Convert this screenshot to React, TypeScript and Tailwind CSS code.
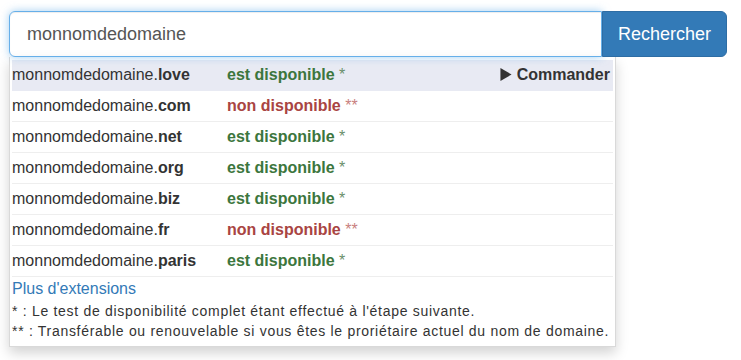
import { Fragment } from "react";

type Row = {
  tld: string;
  free: boolean;
};

const rows: Row[] = [
  { tld: "love", free: true },
  { tld: "com", free: false },
  { tld: "net", free: true },
  { tld: "org", free: true },
  { tld: "biz", free: true },
  { tld: "fr", free: false },
  { tld: "paris", free: true },
];

function ResultRow({ row, active }: { row: Row; active: boolean }) {
  return (
    <div
      className={
        active
          ? "flex items-center h-[31px] pb-[1px] bg-[#e8eaf3] border-b border-transparent"
          : "flex items-center h-[31px] border-b border-[#eeeeee]"
      }
    >
      <div className="w-[215px] shrink-0 text-[#333]">
        monnomdedomaine.<span className="font-bold">{row.tld}</span>
      </div>
      {row.free ? (
        <div className="text-[#3c763d]">
          <span className="font-bold">est disponible</span>
          <span className="text-[#6a8f6b]"> *</span>
        </div>
      ) : (
        <div className="text-[#a94442]">
          <span className="font-bold">non disponible</span>
          <span className="text-[#c98080]"> **</span>
        </div>
      )}
      {active && (
        <div className="ml-auto pr-[3px] font-bold text-[#333] flex items-center gap-[5px]">
          <svg viewBox="0 0 12 14" className="w-[12px] h-[13px]" fill="#333">
            <path d="M0 0 L12 7 L0 14 Z" />
          </svg>
          Commander
        </div>
      )}
    </div>
  );
}

export default function App() {
  return (
    <div
      className="w-[741px] h-[360px] bg-white pl-[9px] pt-[11px]"
      style={{ fontFamily: '"Liberation Sans", Arial, sans-serif' }}
    >
      <div className="flex w-[718px]">
        <div className="w-[593px] h-[46px] border border-[#66afe9] rounded-l-[6px] px-[17px] flex items-center text-[18px] text-[#555] shadow-[inset_0_1px_1px_rgba(0,0,0,0.075),0_0_8px_rgba(102,175,233,0.6)]">
          monnomdedomaine
        </div>
        <button className="w-[125px] h-[46px] bg-[#337ab7] border border-[#2e6da4] rounded-r-[6px] text-white text-[18px]">
          Rechercher
        </button>
      </div>
      <div className="w-[607px] border border-[rgba(0,0,0,0.15)] border-t-0 bg-white px-[2px] pt-[3px] pb-[5px] text-[16px] shadow-[0_6px_12px_rgba(0,0,0,0.175)]">
        {rows.map((row, i) => (
          <Fragment key={row.tld}>
            <ResultRow row={row} active={i === 0} />
          </Fragment>
        ))}
        <div className="h-[21px] leading-[21px] pt-[1px] text-[#337ab7]">
          Plus d'extensions
        </div>
        <div className="mt-[3px] text-[14px] leading-[20px] tracking-[0.7px] text-[#333]">
          <div>* : Le test de disponibilité complet étant effectué à l'étape suivante.</div>
          <div>** : Transférable ou renouvelable si vous êtes le proriétaire actuel du nom de domaine.</div>
        </div>
      </div>
    </div>
  );
}
